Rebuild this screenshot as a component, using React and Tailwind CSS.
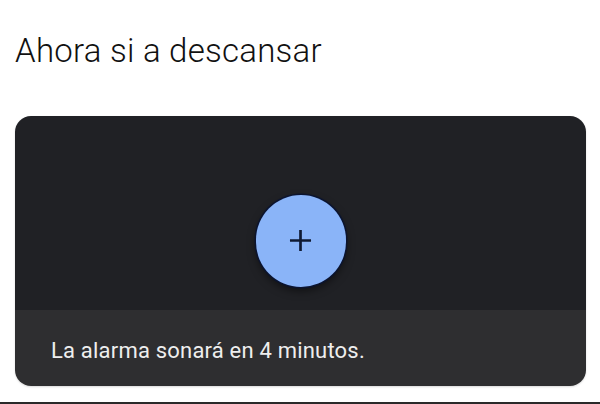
export default function App() {
  return (
    <div
      className="w-[600px] h-[404px] bg-white flex flex-col overflow-hidden"
      style={{ fontFamily: "Roboto, 'Liberation Sans', sans-serif" }}
    >
      <h1 className="mt-[31px] ml-[15px] text-[33px] leading-[40px] font-light text-[#111111] tracking-[0.25px]">
        Ahora si a descansar
      </h1>
      <div className="mt-[45px] ml-[15px] w-[571px] h-[270px] rounded-[16px] overflow-hidden flex flex-col shadow-[0_1px_2px_rgba(0,0,0,0.15)]">
        <div className="h-[194px] bg-[#202125] flex justify-center pt-[79px]">
          <div className="w-[90px] h-[92px] rounded-full bg-[#8ab4f8] flex items-center justify-center shadow-[0_0_0_1.5px_#0b1430,0_4px_8px_rgba(0,0,0,0.5)]">
            <svg width="23" height="23" viewBox="0 0 24 24" className="mt-[-2px]">
              <path d="M12 1v22M1 12h22" stroke="#0f1a33" strokeWidth="2.8" fill="none" />
            </svg>
          </div>
        </div>
        <div className="flex-1 bg-[#2e2e30] pl-[36px] pt-[28px]">
          <p className="text-[22px] leading-[26px] text-[#eeeeee] tracking-[0.2px]">
            La alarma sonará en 4 minutos.
          </p>
        </div>
      </div>
      <div className="mt-auto h-[2px] bg-[#2a2a2a]" />
    </div>
  );
}
